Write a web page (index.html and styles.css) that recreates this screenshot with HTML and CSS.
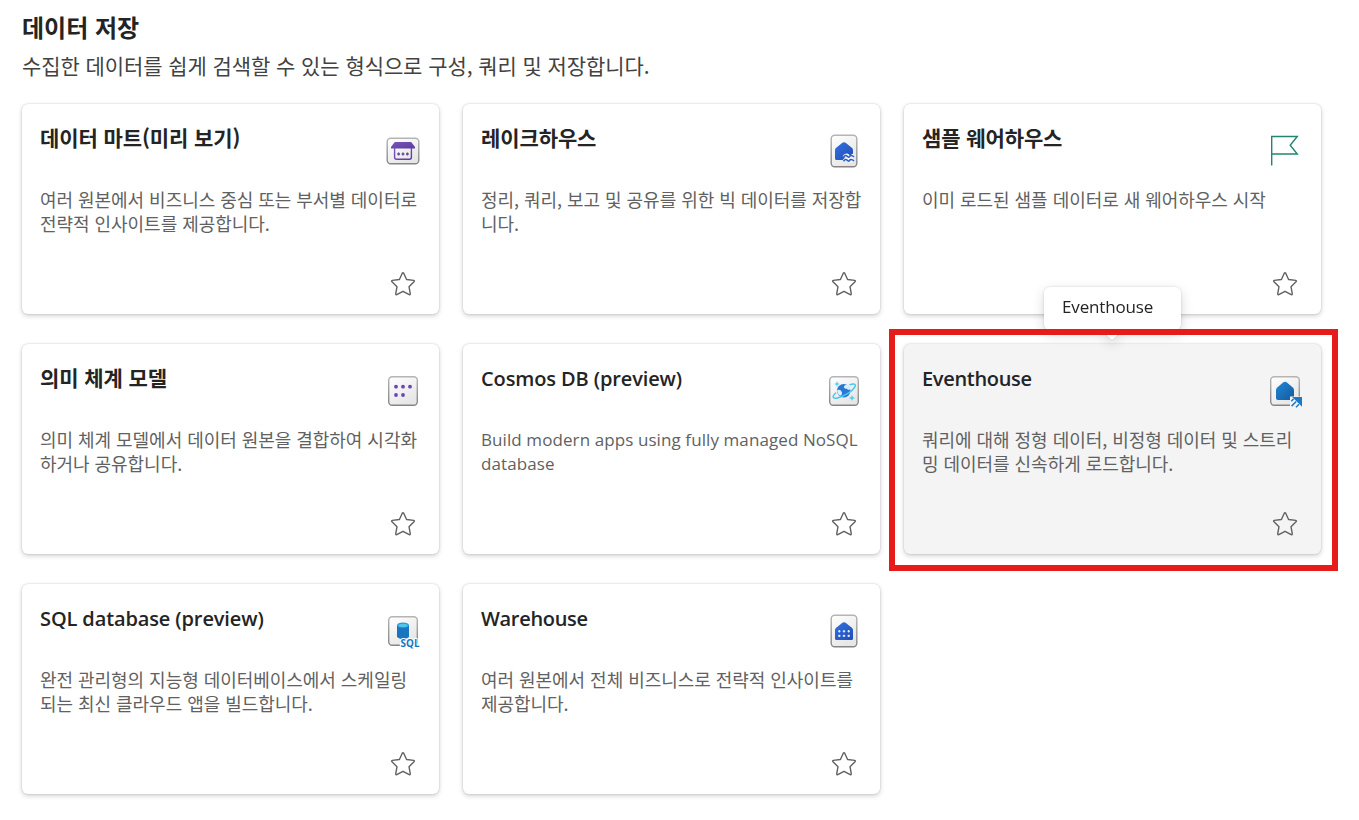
FILE: index.html
```html
<!DOCTYPE html>
<html lang="ko">
<head>
<meta charset="utf-8">
<title>데이터 저장</title>
<link rel="stylesheet" href="styles.css">
</head>
<body>
<svg class="defs" width="0" height="0" aria-hidden="true">
  <defs>
    <linearGradient id="tile" x1="0" y1="0" x2="0.6" y2="1"><stop offset="0" stop-color="#fff"/><stop offset="1" stop-color="#e6e6e6"/></linearGradient>
    <linearGradient id="edge" x1="0" y1="0" x2="0" y2="1"><stop offset="0" stop-color="#b5b5b5"/><stop offset="1" stop-color="#858585"/></linearGradient>
    <linearGradient id="purple" x1="0" y1="0" x2="1" y2="1"><stop offset="0" stop-color="#7b55ba"/><stop offset="1" stop-color="#5c3a9c"/></linearGradient>
    <linearGradient id="blue" x1="0" y1="0" x2="1" y2="1"><stop offset="0" stop-color="#3470e0"/><stop offset="1" stop-color="#204fb4"/></linearGradient>
    <linearGradient id="azure" x1="0" y1="0" x2="1" y2="1"><stop offset="0" stop-color="#2088d8"/><stop offset="1" stop-color="#155a9c"/></linearGradient>
    <symbol id="star" viewBox="0 0 26 26"><path d="M12.3 2.2Q13 1 13.7 2.2L16.6 8.5L23.7 9.4Q25 9.8 24 10.8L19 15.7L20.3 22.8Q20.3 24 19.2 23.6L13 20.3L6.8 23.6Q5.7 24 5.7 22.8L7 15.7L2 10.8Q1 9.8 2.3 9.4L9.4 8.5Z" fill="none" stroke="#616161" stroke-width="1.4" stroke-linejoin="round"/></symbol>
  </defs>
</svg>
<main class="page">
  <h1 class="heading">데이터 저장</h1>
  <p class="subtitle">수집한 데이터를 쉽게 검색할 수 있는 형식으로 구성, 쿼리 및 저장합니다.</p>
  <div class="grid">
    <article class="card">
      <header class="card-head"><h2 class="title">데이터 마트(미리 보기)</h2>
        <svg class="icon" viewBox="0 0 36 36"><rect x="2.2" y="5.2" width="31.6" height="25.6" rx="3.5" fill="url(#tile)" stroke="url(#edge)" stroke-width="1.4"/><path d="M9.8 9H26.2L30 14V15.5H6V14Z" fill="url(#purple)"/><path d="M9.6 15V24.3Q9.6 26.3 11.6 26.3H24.4Q26.4 26.3 26.4 24.3V15" fill="none" stroke="url(#purple)" stroke-width="1.4"/><path d="M12.2 21h2.8M13.6 19.6v2.8M16.6 21h2.8M18 19.6v2.8M21 21h2.8M22.4 19.6v2.8" stroke="#6944a8" stroke-width="1.4"/></svg></header>
      <p class="desc">여러 원본에서 비즈니스 중심 또는 부서별 데이터로<br>전략적 인사이트를 제공합니다.</p>
      <svg class="star"><use href="#star"/></svg>
    </article>
    <article class="card">
      <header class="card-head"><h2 class="title">레이크하우스</h2>
        <svg class="icon" viewBox="0 0 36 36"><rect x="5.2" y="2.2" width="25.6" height="31.6" rx="3.5" fill="url(#tile)" stroke="url(#edge)" stroke-width="1.4"/><path d="M16.4 9.7Q18 8.6 19.6 9.7L25.8 14.7Q27 15.8 27 17V22H20L18.5 27H10.5Q9 27 9 25.5V17Q9 15.8 10.2 14.7Z" fill="url(#blue)"/><path d="M18 24.1q2-3 4-1t5.8-1M18 28.1q2-3 4-1t5.8-1" fill="none" stroke="#f7f7f7" stroke-width="3.5"/><path d="M17.5 24.3q2-3 3.7-1t3-.6q1.5-.8 3.8 1.2M17.5 28.3q2-3 3.7-1t3-.6q1.5-.8 3.8 1.2" fill="none" stroke="#2961c5" stroke-width="1.6"/></svg></header>
      <p class="desc">정리, 쿼리, 보고 및 공유를 위한 빅 데이터를 저장합<br>니다.</p>
      <svg class="star"><use href="#star"/></svg>
    </article>
    <article class="card">
      <header class="card-head"><h2 class="title">샘플 웨어하우스</h2>
        <svg class="icon" viewBox="0 0 36 36"><path d="M4.7 32.5V3.5H30.3L23.2 12.2L30.3 21H4.7" fill="none" stroke="#238571" stroke-width="1.4"/></svg></header>
      <p class="desc">이미 로드된 샘플 데이터로 새 웨어하우스 시작</p>
      <svg class="star"><use href="#star"/></svg>
    </article>
    <article class="card">
      <header class="card-head"><h2 class="title">의미 체계 모델</h2>
        <svg class="icon" viewBox="0 0 36 36"><rect x="3.7" y="3.7" width="28.6" height="28.6" rx="3.5" fill="url(#tile)" stroke="url(#edge)" stroke-width="1.4"/><g fill="#6c45b3"><circle cx="11" cy="13.7" r="1.9"/><circle cx="18" cy="13.7" r="1.9"/><circle cx="25" cy="13.7" r="1.9"/><circle cx="11" cy="22" r="1.9"/><circle cx="18" cy="22" r="1.9"/></g></svg></header>
      <p class="desc">의미 체계 모델에서 데이터 원본을 결합하여 시각화<br>하거나 공유합니다.</p>
      <svg class="star"><use href="#star"/></svg>
    </article>
    <article class="card">
      <header class="card-head"><h2 class="title latin">Cosmos DB (preview)</h2>
        <svg class="icon" viewBox="0 0 36 36"><rect x="3.7" y="3.7" width="28.6" height="28.6" rx="3.5" fill="url(#tile)" stroke="url(#edge)" stroke-width="1.4"/><circle cx="17.7" cy="17.8" r="6.8" fill="#2878d4"/><path d="M11.2 17q3.2-1.2 4.5 1.8t-1.8 4q-3-2.2-2.7-5.8M17.8 14q.8-2.6 3.6-2.2 2.6 1.7 2.8 4.7-2.5 1-3.6-.9-2.2.5-2.8-1.6" fill="#d9f1ff"/><path d="M23.4 11.9C28 10.2 30.4 11 28.9 13.8C26.5 18.2 18 23.4 11.6 24.9C6.6 26 5.4 23.8 10 19.8" fill="none" stroke="#48c7ef" stroke-width="1.5"/><path d="M11 8l.8 2.2L14 11l-2.2.8L11 14l-.8-2.2L8 11l2.2-.8ZM26 22l.9 2.1L29 25l-2.1.9L26 28l-.9-2.1L23 25l2.1-.9Z" fill="#50cff2"/></svg></header>
      <p class="desc latin">Build modern apps using fully managed NoSQL<br>database</p>
      <svg class="star"><use href="#star"/></svg>
    </article>
    <article class="card card-hover">
      <div class="tooltip">Eventhouse</div>
      <div class="highlight"></div>
      <header class="card-head"><h2 class="title latin tight">Eventhouse</h2>
        <svg class="icon" viewBox="0 0 36 36"><rect x="3.7" y="3.7" width="28.6" height="28.6" rx="3.5" fill="url(#tile)" stroke="url(#edge)" stroke-width="1.4"/><path d="M16.4 9.2Q18 8.1 19.6 9.2L25.8 14.4Q27 15.5 27 17V25Q27 27 25 27H11Q9 27 9 25V17Q9 15.5 10.2 14.4Z" fill="url(#azure)"/><path d="M23 23.5H36V36H23Z" fill="#f4f4f4"/><path d="M25.2 24H35V33.8Z" fill="#1e79c5"/><path d="M24.3 28.2l2.3-2.3M24.6 33.1l4.6-4.6M29 34.2l3-3" stroke="#1e79c5" stroke-width="1.5"/></svg></header>
      <p class="desc">쿼리에 대해 정형 데이터, 비정형 데이터 및 스트리<br>밍 데이터를 신속하게 로드합니다.</p>
      <svg class="star"><use href="#star"/></svg>
    </article>
    <article class="card">
      <header class="card-head"><h2 class="title latin">SQL database (preview)</h2>
        <svg class="icon" viewBox="0 0 36 36"><rect x="3.7" y="3.7" width="28.6" height="28.6" rx="3.5" fill="url(#tile)" stroke="url(#edge)" stroke-width="1.4"/><path d="M12 12V24Q18 28.5 24 24V12Z" fill="#1875bf"/><ellipse cx="18" cy="12.2" rx="6" ry="2.8" fill="#2599df"/><ellipse cx="18" cy="12.4" rx="4.6" ry="1.7" fill="#51c4ec"/><text class="sql" x="15.6" y="34" textLength="19" lengthAdjust="spacingAndGlyphs">SQL</text></svg></header>
      <p class="desc">완전 관리형의 지능형 데이터베이스에서 스케일링<br>되는 최신 클라우드 앱을 빌드합니다.</p>
      <svg class="star"><use href="#star"/></svg>
    </article>
    <article class="card">
      <header class="card-head"><h2 class="title latin tight">Warehouse</h2>
        <svg class="icon" viewBox="0 0 36 36"><rect x="5.2" y="2.2" width="25.6" height="31.6" rx="3.5" fill="url(#tile)" stroke="url(#edge)" stroke-width="1.4"/><path d="M16.4 9.7Q18 8.6 19.6 9.7L25.8 14.7Q27 15.8 27 17V25.5Q27 27 25.5 27H10.5Q9 27 9 25.5V17Q9 15.8 10.2 14.7Z" fill="url(#blue)"/><g stroke="#eef3ff" stroke-width="1.1"><path d="M12.1 18.2h2.4M13.3 17v2.4M16.8 18.2h2.4M18 17v2.4M21.5 18.2h2.4M22.7 17v2.4M12.1 22.9h2.4M13.3 21.7v2.4M16.8 22.9h2.4M18 21.7v2.4M21.5 22.9h2.4M22.7 21.7v2.4"/></g></svg></header>
      <p class="desc">여러 원본에서 전체 비즈니스로 전략적 인사이트를<br>제공합니다.</p>
      <svg class="star"><use href="#star"/></svg>
    </article>
  </div>
</main>
</body>
</html>
```
FILE: styles.css
```css
* { box-sizing: border-box; }
body { margin: 0; background: #fff; color: #242424; font-family: "Noto Sans CJK KR", sans-serif; }
.defs { position: absolute; }
.page { height: 820px; padding: 10px 22px 0; overflow: hidden; }
.heading { margin: 0; font-size: 24px; font-weight: 700; line-height: 34px; white-space: nowrap; }
.subtitle { margin: 7px 0 24px; font-size: 21px; font-weight: 400; line-height: 29px; letter-spacing: -.08px; color: #424242; white-space: nowrap; }
.grid { display: grid; grid-template-columns: repeat(3, 417px); grid-auto-rows: 210px; gap: 30px 24px; }
.card { position: relative; display: flex; flex-direction: column; padding: 17px 18px 18px; border-radius: 6px; background: #fff; box-shadow: 0 0 2px rgba(0,0,0,.18), 0 2px 5px rgba(0,0,0,.18); }
.card-hover { background: #f4f4f4; }
.card-head { display: flex; justify-content: space-between; height: 66px; }
.title { margin: 0; font-size: 21px; font-weight: 700; line-height: 32px; letter-spacing: -.1px; white-space: nowrap; }
.title.latin { padding-top: 2px; font-family: "Open Sans", "Noto Sans CJK KR", sans-serif; font-size: 20px; font-weight: 600; letter-spacing: -.12px; }
.title.tight { letter-spacing: -.32px; }
.icon { width: 36px; height: 36px; margin: 12px 0 0; flex: none; }
.desc { margin: 0; font-size: 18px; font-weight: 400; line-height: 24px; letter-spacing: -.04px; color: #616161; white-space: nowrap; }
.desc.latin { padding-top: 1px; font-family: "Open Sans", "Noto Sans CJK KR", sans-serif; font-size: 17px; letter-spacing: .09px; }
.star { width: 26px; height: 26px; margin: auto 5px -1px auto; }
.sql { font: 700 10px "Open Sans", sans-serif; fill: #1476bf; stroke: #fff; stroke-width: 2px; paint-order: stroke; }
.tooltip { position: absolute; z-index: 2; left: 140px; top: -57px; width: 137px; height: 43px; padding-left: 18px; border-radius: 6px; background: #fff; font: 400 17px/40px "Open Sans", sans-serif; letter-spacing: -.15px; filter: drop-shadow(0 0 1px rgba(0,0,0,.14)) drop-shadow(0 4px 6px rgba(0,0,0,.16)); }
.tooltip::after { content: ""; position: absolute; left: 60px; bottom: -7px; width: 16px; height: 16px; border-radius: 0 0 3px 0; background: #fff; transform: rotate(45deg); }
.highlight { position: absolute; z-index: 3; inset: -15px -17px -17px -15px; border: 6px solid #e81b1b; }
```
